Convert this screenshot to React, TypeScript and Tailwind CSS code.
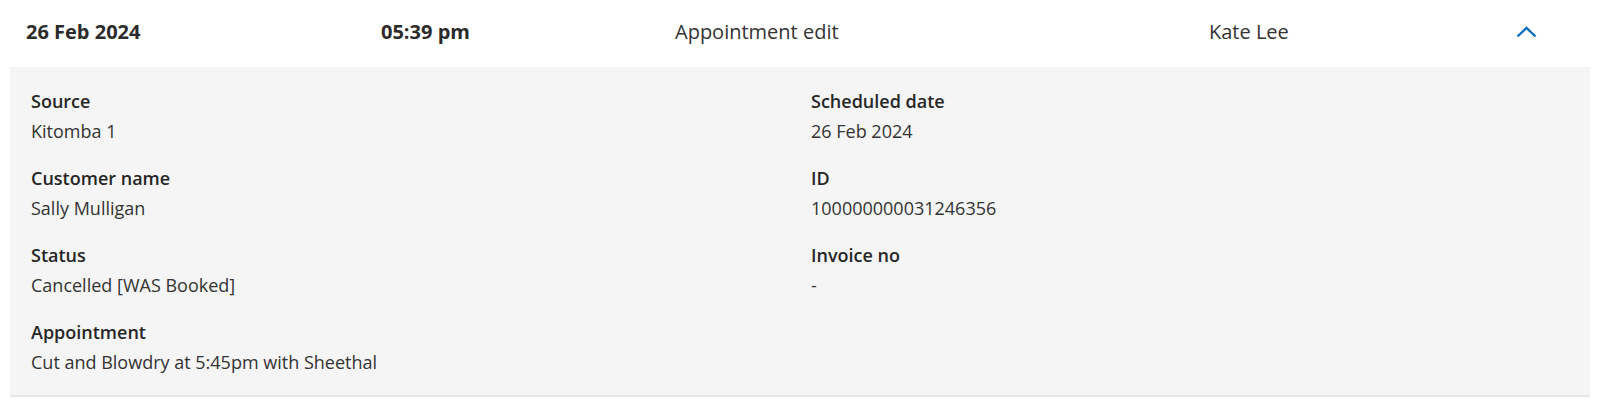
const details = {
  left: [
    { label: "Source", value: "Kitomba 1" },
    { label: "Customer name", value: "Sally Mulligan" },
    { label: "Status", value: "Cancelled [WAS Booked]" },
    { label: "Appointment", value: "Cut and Blowdry at 5:45pm with Sheethal" },
  ],
  right: [
    { label: "Scheduled date", value: "26 Feb 2024" },
    { label: "ID", value: "100000000031246356" },
    { label: "Invoice no", value: "-" },
  ],
};

function Field({ label, value }: { label: string; value: string }) {
  return (
    <div className="flex flex-col">
      <span className="leading-[30px] font-semibold text-[#262626]">{label}</span>
      <span className="leading-[31px] text-[#333333]">{value}</span>
    </div>
  );
}

export default function App() {
  return (
    <div className="w-[1600px] bg-white text-[18px] font-['Open_Sans',sans-serif] text-[#333333]">
      <div className="flex h-[67px] items-center pb-[4px] pl-[26px] text-[20px]">
        <span className="w-[355px] font-bold text-[#2b2b2b]">26 Feb 2024</span>
        <span className="w-[294px] font-bold text-[#2b2b2b]">05:39 pm</span>
        <span className="w-[534px]">Appointment edit</span>
        <span className="w-[307px]">Kate Lee</span>
        <button className="flex h-[20px] w-[21px] items-center justify-center">
          <svg width="21" height="12" viewBox="0 0 21 12" fill="none">
            <polyline
              points="1.5,10.5 10.5,2 19.5,10.5"
              stroke="#0b6fc1"
              strokeWidth="2.4"
            />
          </svg>
        </button>
      </div>

      <div className="mx-[10px] grid grid-cols-[780px_1fr] border-b-2 border-[#e6e6e6] bg-[#f5f5f5] px-[21px] pt-[19px] pb-[17px]">
        <div className="flex flex-col gap-[16px]">
          {details.left.map((d) => (
            <Field key={d.label} label={d.label} value={d.value} />
          ))}
        </div>
        <div className="flex flex-col gap-[16px]">
          {details.right.map((d) => (
            <Field key={d.label} label={d.label} value={d.value} />
          ))}
        </div>
      </div>
    </div>
  );
}
